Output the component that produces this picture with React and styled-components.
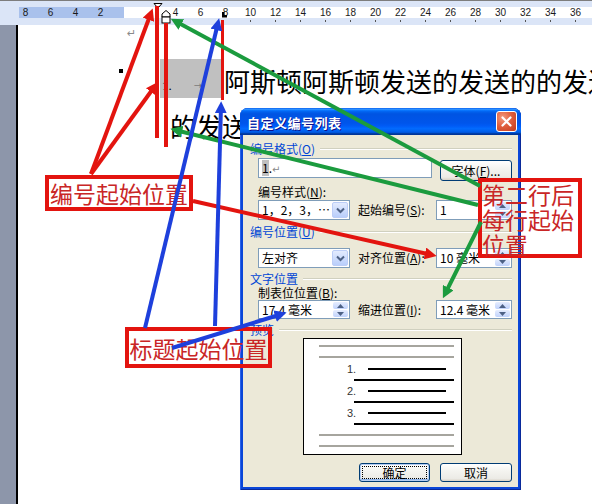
import React from "react";
import styled, { createGlobalStyle, css } from "styled-components";

const GlobalStyle = createGlobalStyle`
  html, body { margin: 0; padding: 0; background: #fff; }
  body { font-family: "Noto Sans CJK SC", "DejaVu Sans", sans-serif; }
`;

const RULER_NUMBERS = ["8", "6", "4", "2", "", "", "4", "6", "8", "10", "12", "14", "16", "18", "20", "22", "24", "26", "28", "30", "32", "34", "36"];

const INK = { red: "#e3140f", green: "#1b9b3e", blue: "#1e40dc" };

// end points stop a few px short of the tip, the marker draws the rest
const ARROWS = [
  { c: "red", from: [91, 174], to: [151, 13] },
  { c: "red", from: [91, 174], to: [155, 86] },
  { c: "red", from: [193, 201], to: [432, 255] },
  { c: "green", from: [480, 186], to: [175, 21] },
  { c: "green", from: [478, 205], to: [175, 130] },
  { c: "green", from: [481, 222], to: [445, 294] },
  { c: "blue", from: [145, 328], to: [218, 23] },
  { c: "blue", from: [215, 326], to: [221, 106] },
  { c: "blue", from: [172, 348], to: [282, 314] },
];

const BARS = [
  { x: 155, y: 6, w: 4, h: 132 },
  { x: 164, y: 23, w: 4, h: 124 },
  { x: 221, y: 20, w: 3, h: 80 },
];

const App = () => (
  <>
    <GlobalStyle />
    <Screen>
      <Ruler>
        <RulerCap />
        <RulerScale>
          {RULER_NUMBERS.map((n, i) => (
            <RulerNum key={i}>{n}</RulerNum>
          ))}
        </RulerScale>
        <RulerTicks>
          {RULER_NUMBERS.map((n, i) => (
            <RulerTick key={i} $on={i >= 9} />
          ))}
        </RulerTicks>
        <RulerMarks width="592" height="25" viewBox="0 0 592 25">
          <path d="M154 3.5 H162 L158 8 Z" fill="#fff" stroke="#000" strokeWidth="1" />
          <path d="M166 10.5 L170 14 V17 H162 V14 Z" fill="#fff" stroke="#000" strokeWidth="1" />
          <rect x="162" y="17" width="8" height="6" fill="#fff" stroke="#000" strokeWidth="1" />
          <path d="M222 12 H224.5 V15 H227 V17.5 H222 Z" fill="#000" />
        </RulerMarks>
      </Ruler>

      <Workspace>
        <SideBar />
        <Page>
          <ParaMark>↵</ParaMark>
          <HeadingRow>
            <KeepMark />
            <NumberField>
              <ListNum>1.</ListNum>
              <TabArrow>→</TabArrow>
            </NumberField>
            <HeadingText>阿斯顿阿斯顿发送的发送的的发送的</HeadingText>
          </HeadingRow>
          <BodyLine>的发送的发送</BodyLine>
        </Page>
      </Workspace>

      <Dialog>
        <TitleBar>
          <TitleText>自定义编号列表</TitleText>
          <CloseButton>
            <svg width="11" height="11" viewBox="0 0 11 11">
              <path d="M1.5 1.5 L9.5 9.5 M9.5 1.5 L1.5 9.5" stroke="#fff" strokeWidth="2.2" strokeLinecap="round" />
            </svg>
          </CloseButton>
        </TitleBar>
        <DialogBody>
          <GroupLabel $top={7}>编号格式(<u>O</u>)</GroupLabel>
          <FieldRow $top={2}>
            <Field $w={174}>
              <FieldText>
                <Highlight>1</Highlight>.<Ret>↵</Ret>
              </FieldText>
            </Field>
            <XPButton $w={72} $h={21} $gapLeft={8} $gapTop={2}>
              字体(<u>F</u>)...
            </XPButton>
          </FieldRow>

          <FieldLabel $top={4}>编号样式(<u>N</u>):</FieldLabel>
          <FieldRow $top={1}>
            <Field $w={92}>
              <FieldText>1，2，3，…</FieldText>
              <DropButton><Chevron /></DropButton>
            </Field>
            <InlineLabel>起始编号(<u>S</u>):</InlineLabel>
            <Field $w={76}>
              <FieldText>1</FieldText>
              <Spin />
            </Field>
          </FieldRow>

          <GroupLabel $top={5}>编号位置(<u>U</u>)</GroupLabel>
          <FieldRow $top={9}>
            <Field $w={92}>
              <FieldText>左对齐</FieldText>
              <DropButton><Chevron /></DropButton>
            </Field>
            <InlineLabel>对齐位置(<u>A</u>):</InlineLabel>
            <Field $w={76}>
              <FieldText>10 毫米</FieldText>
              <Spin />
            </Field>
          </FieldRow>

          <GroupLabel $top={4}>文字位置</GroupLabel>
          <FieldLabel $top={0}>制表位位置(<u>B</u>):</FieldLabel>
          <FieldRow $top={0}>
            <Field $w={92} $h={19}>
              <FieldText>17.4 毫米</FieldText>
              <Spin />
            </Field>
            <InlineLabel>缩进位置(<u>I</u>):</InlineLabel>
            <Field $w={76} $h={19}>
              <FieldText>12.4 毫米</FieldText>
              <Spin />
            </Field>
          </FieldRow>

          <GroupLabel $top={4}>预览</GroupLabel>
          <Preview>
            <PreviewLine $gray $gap={6} $x={15} $w={135} />
            <PreviewLine $gray $gap={9} $x={15} $w={135} />
            <PreviewItem $gap={10}><PreviewNum>1.</PreviewNum><PreviewLine $w={78} /></PreviewItem>
            <PreviewLine $gap={9} $x={50} $w={100} />
            <PreviewItem $gap={9}><PreviewNum>2.</PreviewNum><PreviewLine $w={78} /></PreviewItem>
            <PreviewLine $gap={9} $x={50} $w={100} />
            <PreviewItem $gap={9}><PreviewNum>3.</PreviewNum><PreviewLine $w={78} /></PreviewItem>
            <PreviewLine $gap={9} $x={50} $w={100} />
            <PreviewLine $gray $gap={9} $x={15} $w={135} />
            <PreviewLine $gray $gap={9} $x={15} $w={135} />
          </Preview>

          <ButtonRow>
            <XPButton $w={71} $h={19} $default>
              <FocusRing>确定</FocusRing>
            </XPButton>
            <XPButton $w={72} $h={19}>取消</XPButton>
          </ButtonRow>
        </DialogBody>
      </Dialog>

      <Callout $x={45} $y={175} $w={148} $h={36}>编号起始位置</Callout>
      <Callout $x={125} $y={327} $w={147} $h={41}>标题起始位置</Callout>
      <StackCallout $x={478} $y={178} $w={104} $h={80}>
        第二行后<br />每行起始<br />位置
      </StackCallout>

      <ArrowLayer width="592" height="504" viewBox="0 0 592 504">
        <defs>
          {Object.entries(INK).map(([name, color]) => (
            <marker
              key={name}
              id={`head-${name}`}
              viewBox="0 0 10 10"
              refX="6"
              refY="5"
              markerWidth="12"
              markerHeight="12"
              markerUnits="userSpaceOnUse"
              orient="auto"
            >
              <path d="M0 0 L10 5 L0 10 Z" fill={color} />
            </marker>
          ))}
        </defs>
        {BARS.map((b, i) => (
          <rect key={i} x={b.x} y={b.y} width={b.w} height={b.h} fill={INK.red} />
        ))}
        {ARROWS.map((a, i) => (
          <line
            key={i}
            x1={a.from[0]}
            y1={a.from[1]}
            x2={a.to[0]}
            y2={a.to[1]}
            stroke={INK[a.c]}
            strokeWidth="4"
            markerEnd={`url(#head-${a.c})`}
          />
        ))}
      </ArrowLayer>
    </Screen>
  </>
);

const Chevron = () => (
  <svg width="9" height="7" viewBox="0 0 9 7">
    <path d="M1 1.5 L4.5 5 L8 1.5" fill="none" stroke="#4d6185" strokeWidth="2" />
  </svg>
);

const SpinArrow = ({ down }) => (
  <svg width="7" height="4" viewBox="0 0 7 4">
    <path d={down ? "M0 0 H7 L3.5 4 Z" : "M0 4 H7 L3.5 0 Z"} fill="#4d6185" />
  </svg>
);

const Spin = () => (
  <Spinner>
    <SpinHalf><SpinArrow /></SpinHalf>
    <SpinHalf><SpinArrow down /></SpinHalf>
  </Spinner>
);

// Styled components
const Screen = styled.div`
  position: relative;
  width: 592px;
  height: 504px;
  overflow: hidden;
  background: #fff;
  display: flex;
  flex-direction: column;
`;

const Ruler = styled.div`
  position: relative;
  flex: none;
  height: 25px;
  box-sizing: border-box;
  border-top: 1px solid #7d7d7d;
  background: #dbe5f7;
  display: flex;
  flex-direction: column;
`;

const RulerCap = styled.div`
  height: 6px;
`;

const RulerScale = styled.div`
  display: flex;
  height: 11px;
  padding-left: 13px;
  background: linear-gradient(to right, #dbe5f7 0 19px, #a9c1ec 19px 124px, #ffffff 124px);
`;

const RulerNum = styled.span`
  flex: none;
  width: 25px;
  text-align: center;
  font: 10px/11px "Liberation Sans", sans-serif;
  color: #1a1a1a;
`;

const RulerTicks = styled.div`
  display: flex;
  height: 6px;
  padding-left: 13px;
`;

const RulerTick = styled.span`
  flex: none;
  width: 25px;
  display: flex;
  justify-content: center;
  padding-top: 2px;
  box-sizing: border-box;

  &::after {
    content: "";
    width: 1px;
    height: 2px;
    background: ${(p) => (p.$on ? "#555" : "transparent")};
  }
`;

const RulerMarks = styled.svg`
  position: absolute;
  left: 0;
  top: -1px;
`;

const Workspace = styled.div`
  flex: 1;
  display: flex;
  min-height: 0;
`;

const SideBar = styled.div`
  flex: none;
  width: 16px;
  background: #8d96aa;
  border-right: 2px solid #000;
`;

const Page = styled.div`
  flex: 1;
  min-width: 0;
  background: #fff;
  padding-top: 2px;
  overflow: hidden;
`;

const ParaMark = styled.div`
  margin-left: 109px;
  height: 14px;
  font: 11px/14px "DejaVu Sans", sans-serif;
  color: #8a8a8a;
`;

const HeadingRow = styled.div`
  display: flex;
  height: 40px;
  margin-top: 18px;
  padding-left: 101px;
  white-space: nowrap;
`;

const KeepMark = styled.span`
  flex: none;
  width: 4px;
  height: 4px;
  margin-top: 10px;
  background: #000;
`;

const NumberField = styled.span`
  flex: none;
  display: flex;
  align-items: flex-end;
  width: 63px;
  height: 39px;
  margin-left: 37px;
  padding: 0 0 6px 2px;
  box-sizing: border-box;
  background: #c0c0c0;
`;

const ListNum = styled.span`
  font: 13px/13px "Liberation Serif", serif;
  color: #000;
`;

const TabArrow = styled.span`
  margin-left: 22px;
  font: 10px/12px "DejaVu Sans", sans-serif;
  color: #7a7a7a;
`;

const HeadingText = styled.span`
  margin-left: 1px;
  padding-top: 2px;
  font: 26px/40px "Noto Sans CJK SC", sans-serif;
  color: #000;
`;

const BodyLine = styled.div`
  margin-top: 12px;
  padding-left: 152px;
  font: 26px/30px "Noto Sans CJK SC", sans-serif;
  color: #000;
  white-space: nowrap;
`;

const Dialog = styled.div`
  position: absolute;
  left: 240px;
  top: 108px;
  z-index: 1;
  width: 281px;
  height: 382px;
  box-sizing: border-box;
  display: flex;
  flex-direction: column;
  padding: 0 3px 3px;
  border-radius: 8px 8px 0 0;
  background: #0a46d8;
  box-shadow: inset 1px 0 #2a62e8, inset -1px 0 #0a2a9a, inset 0 -1px #0a2a9a;
`;

const TitleBar = styled.div`
  flex: none;
  height: 27px;
  margin: 0 -3px;
  display: flex;
  align-items: center;
  justify-content: space-between;
  padding: 0 4px 0 7px;
  border-radius: 8px 8px 0 0;
  background: linear-gradient(
    to bottom,
    #0058ee 0%,
    #3593ff 4%,
    #288eff 6%,
    #127dff 8%,
    #036ffc 10%,
    #0262ee 14%,
    #0057e5 20%,
    #0054e3 24%,
    #0055eb 56%,
    #005bf5 66%,
    #026afe 76%,
    #0062ef 86%,
    #0052d6 92%,
    #0040ab 94%,
    #003092 100%
  );
`;

const TitleText = styled.span`
  padding-top: 2px;
  font: bold 13px/16px "Noto Sans CJK SC", sans-serif;
  letter-spacing: 0.5px;
  color: #fff;
  text-shadow: 1px 1px #0f1089;
`;

const CloseButton = styled.span`
  width: 21px;
  height: 21px;
  box-sizing: border-box;
  display: flex;
  align-items: center;
  justify-content: center;
  border: 1px solid #fff;
  border-radius: 3px;
  background: radial-gradient(circle at 30% 30%, #f29a7e 0%, #e0603f 45%, #c23a1c 100%);
`;

const DialogBody = styled.div`
  flex: 1;
  display: flex;
  flex-direction: column;
  background: #ece9d8;
  font: 12px/14px "Noto Sans CJK SC", sans-serif;
  color: #000;

  u {
    text-decoration: underline;
    text-underline-offset: 1px;
  }
`;

const GroupLabel = styled.div`
  display: flex;
  align-items: center;
  height: 14px;
  margin-top: ${(p) => p.$top}px;
  padding-left: 7px;
  color: #0046d5;
  white-space: nowrap;

  &::after {
    content: "";
    flex: 1;
    margin: 0 6px 0 5px;
    border-top: 1px solid #d0d0bf;
    border-bottom: 1px solid #fff;
  }
`;

const FieldLabel = styled.div`
  height: 14px;
  margin-top: ${(p) => p.$top}px;
  padding-left: 15px;
  white-space: nowrap;
`;

const FieldRow = styled.div`
  display: flex;
  align-items: center;
  margin-top: ${(p) => p.$top}px;
  padding-left: 15px;
`;

const Field = styled.div`
  flex: none;
  width: ${(p) => p.$w}px;
  height: ${(p) => p.$h || 20}px;
  box-sizing: border-box;
  display: flex;
  align-items: center;
  padding-left: 3px;
  border: 1px solid #7f9db9;
  background: #fff;
  align-self: flex-start;
`;

const FieldText = styled.span`
  flex: 1;
  min-width: 0;
  overflow: hidden;
  white-space: nowrap;
  line-height: 16px;
`;

const Highlight = styled.span`
  background: #c0c0c0;
`;

const Ret = styled.span`
  font: 10px/12px "DejaVu Sans", sans-serif;
  color: #888;
`;

const DropButton = styled.span`
  flex: none;
  width: 16px;
  height: 16px;
  margin-right: 1px;
  box-sizing: border-box;
  display: flex;
  align-items: center;
  justify-content: center;
  border: 1px solid #bccdf7;
  border-radius: 2px;
  background: linear-gradient(#e3ebfe, #b9cefb);
`;

const Spinner = styled.span`
  flex: none;
  align-self: stretch;
  width: 15px;
  margin: 1px 1px 1px 0;
  display: flex;
  flex-direction: column;
  gap: 1px;
`;

const SpinHalf = styled.span`
  flex: 1;
  display: flex;
  align-items: center;
  justify-content: center;
  border-radius: 2px;
  background: linear-gradient(#e6edfe, #c0d2fb);
`;

const InlineLabel = styled.span`
  flex: none;
  width: 86px;
  padding-left: 8px;
  box-sizing: border-box;
  white-space: nowrap;
  align-self: center;
`;

const XPButton = styled.div`
  flex: none;
  width: ${(p) => p.$w}px;
  height: ${(p) => p.$h}px;
  margin-left: ${(p) => p.$gapLeft || 0}px;
  margin-top: ${(p) => p.$gapTop || 0}px;
  align-self: flex-start;
  box-sizing: border-box;
  display: flex;
  align-items: center;
  justify-content: center;
  border: 1px solid #003c74;
  border-radius: 3px;
  background: linear-gradient(#ffffff, #f4f4f0 40%, #ecebe6 85%, #d8d2c6);
  white-space: nowrap;

  ${(p) =>
    p.$default &&
    css`
      padding: 2px;
      box-shadow: inset 0 0 0 1px #b5cdf2, inset 0 -1px 0 1px #8db2e8;
    `}
`;

const FocusRing = styled.span`
  flex: 1;
  align-self: stretch;
  display: flex;
  align-items: center;
  justify-content: center;
  border: 1px dotted #000;
`;

const Preview = styled.div`
  flex: none;
  width: 159px;
  height: 117px;
  margin: 1px 0 0 60px;
  box-sizing: border-box;
  border: 1px solid #000;
  background: #fff;
`;

const PreviewLine = styled.div`
  flex: none;
  width: ${(p) => p.$w}px;
  height: 2px;
  margin-top: ${(p) => p.$gap || 0}px;
  margin-left: ${(p) => p.$x || 0}px;
  background: ${(p) => (p.$gray ? "#a6a59e" : "#000")};
`;

const PreviewItem = styled.div`
  display: flex;
  align-items: center;
  height: 2px;
  margin-top: ${(p) => p.$gap}px;
  padding-left: 43px;
`;

const PreviewNum = styled.span`
  flex: none;
  width: 21px;
  font: 11px/11px "Liberation Sans", sans-serif;
  color: #333;
`;

const ButtonRow = styled.div`
  display: flex;
  justify-content: flex-end;
  gap: 10px;
  margin-top: 8px;
  padding-right: 6px;
`;

const Callout = styled.div`
  position: absolute;
  left: ${(p) => p.$x}px;
  top: ${(p) => p.$y}px;
  z-index: 2;
  width: ${(p) => p.$w}px;
  height: ${(p) => p.$h}px;
  box-sizing: border-box;
  display: flex;
  align-items: center;
  justify-content: center;
  border: 4px solid ${INK.red};
  font: 23px/26px "Noto Sans CJK SC", sans-serif;
  color: #c92626;
  white-space: nowrap;
`;

const StackCallout = styled(Callout)`
  display: block;
  line-height: 25px;
  text-align: left;
  padding-top: 0;
`;

const ArrowLayer = styled.svg`
  position: absolute;
  left: 0;
  top: 0;
  z-index: 3;
  pointer-events: none;
`;

export default App;
